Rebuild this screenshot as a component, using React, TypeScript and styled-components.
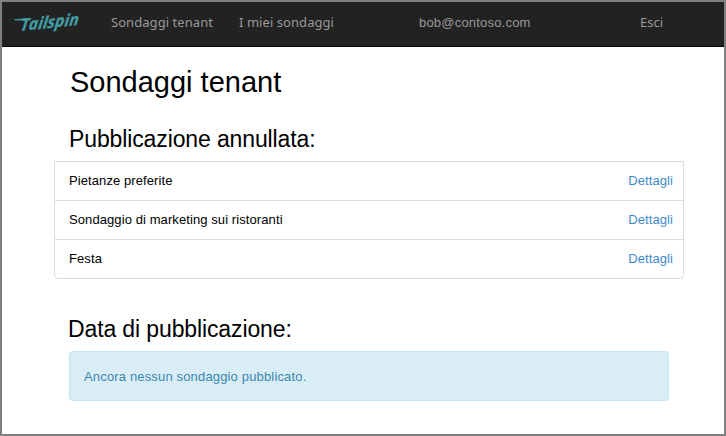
import React from "react";
import styled, { createGlobalStyle } from "styled-components";

const GlobalStyle = createGlobalStyle`
  *, *::before, *::after { box-sizing: border-box; }
  body { margin: 0; background: #fff; }
`;

const Page = styled.div`
  width: 726px;
  height: 436px;
  overflow: hidden;
  border: 2px solid #808080;
  background: #fff;
  color: #000;
  font-family: "Liberation Sans", Arial, sans-serif;
`;

const Navbar = styled.header`
  display: flex;
  align-items: flex-start;
  height: 45px;
  background: #222;
  border-bottom: 1px solid #080808;
`;

const Logo = styled.svg`
  display: block;
  flex: none;
  width: 109px;
  height: 44px;
`;

const NavLink = styled.a<{ $width: number; $spacing?: number; $plain?: boolean }>`
  flex: none;
  width: ${(p) => p.$width}px;
  padding-top: ${(p) => (p.$plain ? 11 : 10)}px;
  font-family: ${(p) => (p.$plain ? '"Liberation Sans", Arial' : '"Noto Sans"')}, sans-serif;
  font-size: 13px;
  line-height: 20px;
  letter-spacing: ${(p) => p.$spacing ?? 0}px;
  color: #999;
  text-decoration: none;
  white-space: nowrap;
`;

const Main = styled.main`
  width: 630px;
  margin-left: 52px;
`;

const Title = styled.h1`
  margin: 0;
  padding: 17px 0 0 16px;
  font-size: 29px;
  line-height: 36px;
  font-weight: 400;
`;

const SectionTitle = styled.h2<{ $top: number; $left: number }>`
  margin: 0;
  padding: ${(p) => p.$top}px 0 0 ${(p) => p.$left}px;
  font-size: 23px;
  line-height: 28px;
  letter-spacing: -0.12px;
  font-weight: 400;
`;

const SurveyList = styled.ul`
  margin: 8px 0 0;
  padding: 0;
  list-style: none;
  border: 1px solid #ddd;
  border-radius: 0 0 4px 4px;
`;

const SurveyRow = styled.li`
  display: flex;
  justify-content: space-between;
  height: 39px;
  padding: 0 10px 0 14px;
  font-size: 13px;
  line-height: 38px;
  letter-spacing: 0.09px;

  &:not(:last-child) { border-bottom: 1px solid #ddd; }
  &:last-child { height: 38px; }
`;

const DetailsLink = styled.a`
  color: #428bca;
  text-decoration: none;
`;

const InfoAlert = styled.div`
  width: 600px;
  height: 50px;
  margin: 8px 0 0 15px;
  padding-left: 14px;
  border: 1px solid #bce8f1;
  border-radius: 4px;
  background: #d9edf7;
  color: #3a87ad;
  font-size: 13px;
  line-height: 50px;
  letter-spacing: 0.16px;
`;

const surveys = ["Pietanze preferite", "Sondaggio di marketing sui ristoranti", "Festa"];

export default function App() {
  return (
    <>
      <GlobalStyle />
      <Page>
        <Navbar>
          <Logo viewBox="2 2 109 44" aria-label="Tailspin">
            <g transform="translate(20 31) rotate(-6) skewX(-13)" fill="#439ca4">
              <path d="M-7.5 -12.2 L8 -12 L8 -10.4 L1 -10.2 L-7 -11.2 Z" />
              <text
                fontFamily="Open Sans, sans-serif"
                fontWeight="700"
                fontStyle="italic"
                fontSize="16.5"
                textLength="58.5"
                lengthAdjust="spacingAndGlyphs"
                stroke="#439ca4"
                strokeWidth="0.3"
              >
                Tailspin
              </text>
            </g>
          </Logo>
          <NavLink href="#" $width={128} $spacing={0.06}>Sondaggi tenant</NavLink>
          <NavLink href="#" $width={180} $spacing={0.06}>I miei sondaggi</NavLink>
          <NavLink href="#" $width={221} $plain $spacing={0.2}>bob@contoso.com</NavLink>
          <NavLink href="#" $width={60}>Esci</NavLink>
        </Navbar>
        <Main>
          <Title>Sondaggi tenant</Title>
          <SectionTitle $top={25} $left={15}>Pubblicazione annullata:</SectionTitle>
          <SurveyList>
            {surveys.map((name) => (
              <SurveyRow key={name}>
                <span>{name}</span>
                <DetailsLink href="#">Dettagli</DetailsLink>
              </SurveyRow>
            ))}
          </SurveyList>
          <SectionTitle $top={36} $left={14}>Data di pubblicazione:</SectionTitle>
          <InfoAlert>Ancora nessun sondaggio pubblicato.</InfoAlert>
        </Main>
      </Page>
    </>
  );
}
